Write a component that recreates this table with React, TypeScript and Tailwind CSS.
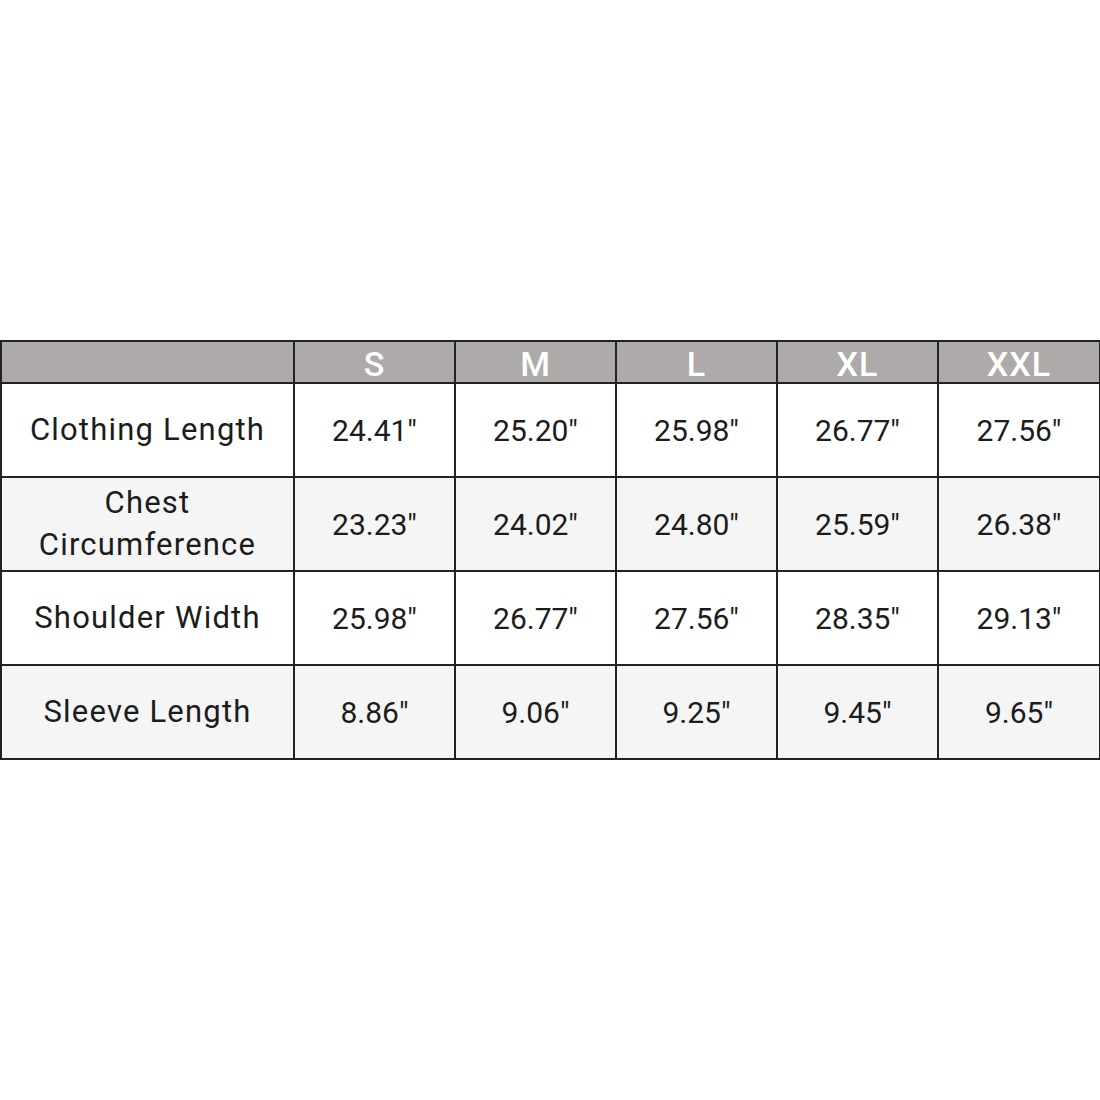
import React from "react";

const sizes = ["S", "M", "L", "XL", "XXL"];
const rows: { label: React.ReactNode; values: string[]; bg: string }[] = [
  { label: "Clothing Length", values: ['24.41"', '25.20"', '25.98"', '26.77"', '27.56"'], bg: "bg-white" },
  { label: <>Chest<br />Circumference</>, values: ['23.23"', '24.02"', '24.80"', '25.59"', '26.38"'], bg: "bg-[#f5f5f5]" },
  { label: "Shoulder Width", values: ['25.98"', '26.77"', '27.56"', '28.35"', '29.13"'], bg: "bg-white" },
  { label: "Sleeve Length", values: ['8.86"', '9.06"', '9.25"', '9.45"', '9.65"'], bg: "bg-[#f5f5f5]" },
];

export default function App() {
  return (
    <div className="w-[1100px] h-[1100px] bg-white flex items-center" style={{ fontFamily: "Roboto, 'Liberation Sans', sans-serif" }}>
      <table className="w-[1099px] border-collapse table-fixed text-[#1c1c1c]">
        <colgroup>
          <col className="w-[293px]" />
          <col className="w-[161px]" />
          <col className="w-[161px]" />
          <col className="w-[161px]" />
          <col className="w-[161px]" />
          <col className="w-[162px]" />
        </colgroup>
        <thead>
          <tr className="bg-[#aeaaa9] h-[42px]">
            <th className="border-2 border-[#222]" />
            {sizes.map((s) => (
              <th key={s} className="border-2 border-[#222] text-white text-[34px] font-medium tracking-[1px] leading-none pt-[4px]">
                {s}
              </th>
            ))}
          </tr>
        </thead>
        <tbody>
          {rows.map((r, i) => (
            <tr key={i} className={`${r.bg} h-[94px]`}>
              <td className="border-2 border-[#222] text-center text-[31px] tracking-[1.2px] leading-[42px]">{r.label}</td>
              {r.values.map((v, j) => (
                <td key={j} className="border-2 border-[#222] text-center text-[30px]">
                  {v}
                </td>
              ))}
            </tr>
          ))}
        </tbody>
      </table>
    </div>
  );
}
